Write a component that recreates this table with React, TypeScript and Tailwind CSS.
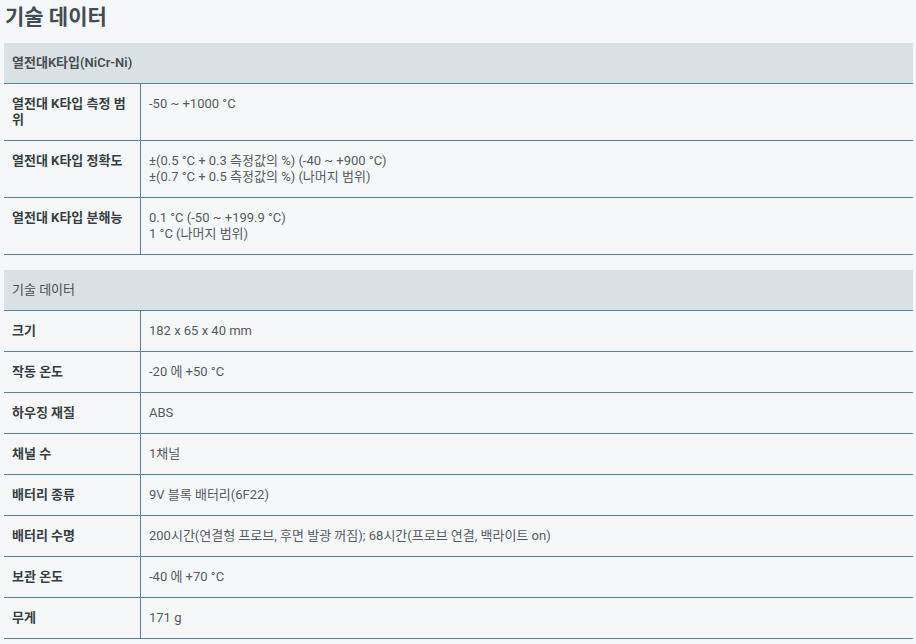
import React from "react";

type Row = { label: string; values: string[] };

const thermo: Row[] = [
  { label: "열전대 K타입 측정 범위", values: ["-50 ~ +1000 °C"] },
  {
    label: "열전대 K타입 정확도",
    values: [
      "±(0.5 °C + 0.3 측정값의 %) (-40 ~ +900 °C)",
      "±(0.7 °C + 0.5 측정값의 %) (나머지 범위)",
    ],
  },
  {
    label: "열전대 K타입 분해능",
    values: ["0.1 °C (-50 ~ +199.9 °C)", "1 °C (나머지 범위)"],
  },
];

const tech: Row[] = [
  { label: "크기", values: ["182 x 65 x 40 mm"] },
  { label: "작동 온도", values: ["-20 에 +50 °C"] },
  { label: "하우징 재질", values: ["ABS"] },
  { label: "채널 수", values: ["1채널"] },
  { label: "배터리 종류", values: ["9V 블록 배터리(6F22)"] },
  {
    label: "배터리 수명",
    values: ["200시간(연결형 프로브, 후면 발광 꺼짐); 68시간(프로브 연결, 백라이트 on)"],
  },
  { label: "보관 온도", values: ["-40 에 +70 °C"] },
  { label: "무게", values: ["171 g"] },
];

const SpecTable = ({
  title,
  rows,
  strongHead,
}: {
  title: string;
  rows: Row[];
  strongHead?: boolean;
}) => (
  <div className="w-[909px]">
    <div
      className={`bg-[#d9e1e4] border-b border-[#5d8196] px-2 py-3 leading-4 text-[#474e52] ${
        strongHead ? "font-semibold" : ""
      }`}
    >
      {title}
    </div>
    {rows.map((row) => (
      <div
        key={row.label}
        className="grid grid-cols-[136px_1fr] border-b border-[#5d8196]"
      >
        <div className="px-2 py-3 leading-4 font-bold text-[#363e42]">
          {row.label}
        </div>
        <div className="border-l border-[#5d8196] px-2 py-3 leading-4 text-[#555b5f]">
          {row.values.map((v) => (
            <div key={v}>{v}</div>
          ))}
        </div>
      </div>
    ))}
  </div>
);

export default function App() {
  return (
    <div className="min-h-[644px] bg-[#f5f7f9] pl-[4px] pt-[5px] text-[13px] font-['Roboto','Noto_Sans_CJK_KR',sans-serif]">
      <h1 className="pl-[1px] text-[21px] leading-[25px] font-bold text-[#434c51] mb-[13px]">
        기술 데이터
      </h1>
      <SpecTable title="열전대K타입(NiCr-Ni)" rows={thermo} strongHead />
      <div className="h-[15px]" />
      <SpecTable title="기술 데이터" rows={tech} />
    </div>
  );
}
